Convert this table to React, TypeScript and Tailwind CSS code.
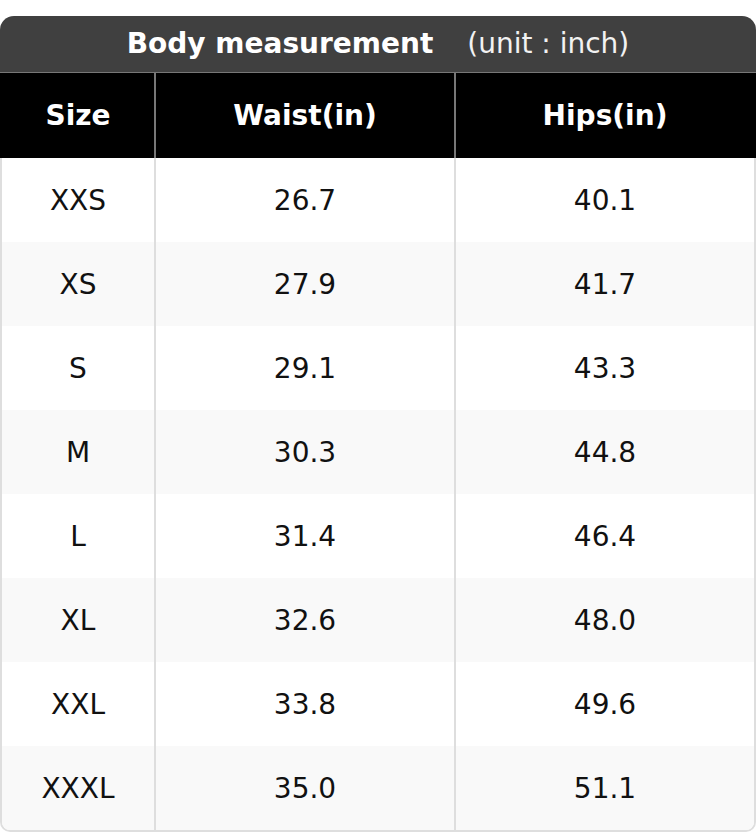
import React from "react";

const rows = [
  ["XXS", "26.7", "40.1"],
  ["XS", "27.9", "41.7"],
  ["S", "29.1", "43.3"],
  ["M", "30.3", "44.8"],
  ["L", "31.4", "46.4"],
  ["XL", "32.6", "48.0"],
  ["XXL", "33.8", "49.6"],
  ["XXXL", "35.0", "51.1"],
];

export default function App() {
  return (
    <div className="w-[756px] pt-[16px] bg-white" style={{ fontFamily: '"DejaVu Sans", sans-serif' }}>
      <div className="h-[56px] pb-[1px] bg-[#404040] rounded-t-[14px] flex items-center justify-center text-white text-[28px] leading-none">
        <span className="font-bold">Body measurement</span>
        <span className="ml-[34px] text-[#f2f2f2]">(unit : inch)</span>
      </div>
      <div className="border-t border-[#777]">
        <div className="grid grid-cols-[154px_300px_1fr] h-[85px] bg-black text-white font-bold text-[28px]">
          <div className="flex items-center justify-center pl-[2px]">Size</div>
          <div className="flex items-center justify-center border-l-2 border-[#777]">Waist(in)</div>
          <div className="flex items-center justify-center border-l-2 border-[#777] pr-[2px]">Hips(in)</div>
        </div>
        <div className="border-x-2 border-b-2 border-[#dedede] rounded-b-[10px] overflow-hidden">
          {rows.map((r, i) => (
            <div
              key={r[0]}
              className={`grid grid-cols-[152px_300px_1fr] h-[84px] text-[28px] text-[#111] ${i % 2 === 1 ? "bg-[#f9f9f9]" : "bg-white"}`}
            >
              <div className="flex items-center justify-center pt-[1px]">{r[0]}</div>
              <div className="flex items-center justify-center pt-[1px] border-l-2 border-[#dedede]">{r[1]}</div>
              <div className="flex items-center justify-center pt-[1px] border-l-2 border-[#dedede]">{r[2]}</div>
            </div>
          ))}
        </div>
      </div>
    </div>
  );
}
